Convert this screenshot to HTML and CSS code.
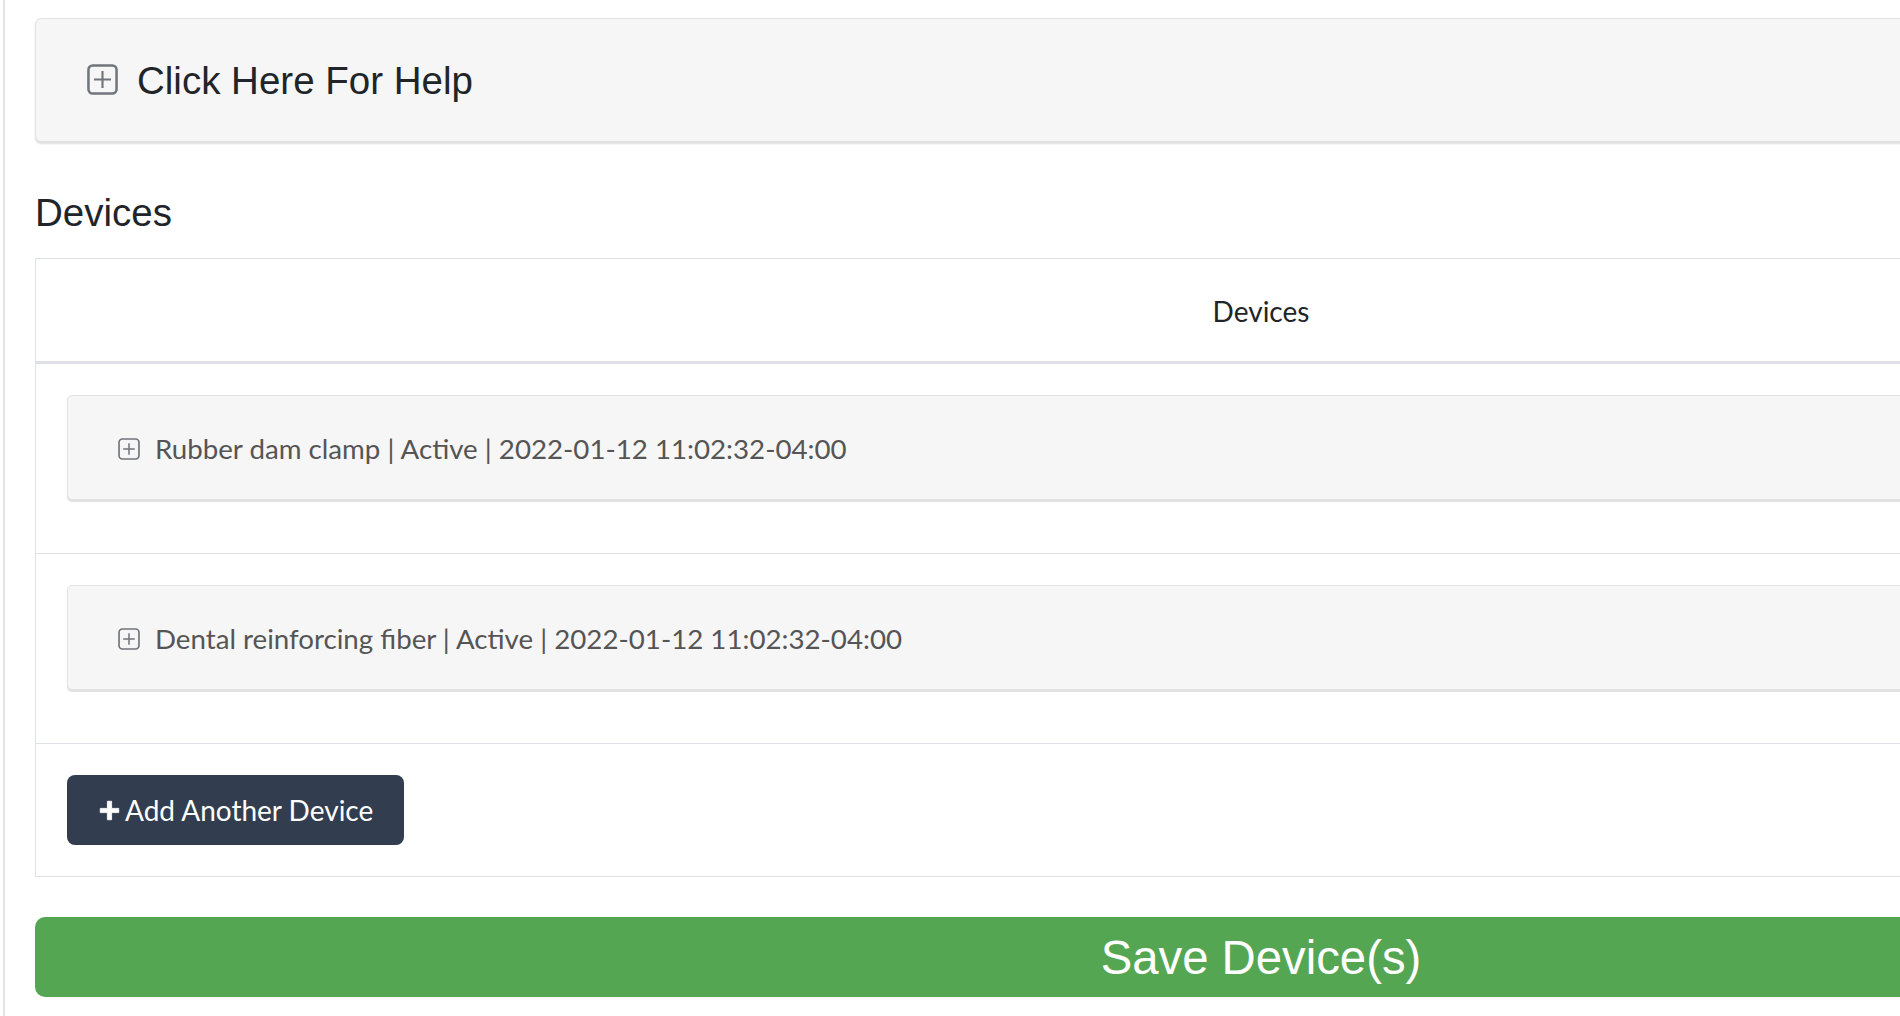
FILE: index.html
```html
<!DOCTYPE html>
<html lang="en">
<head>
<meta charset="utf-8">
<title>Devices</title>
<link rel="stylesheet" href="styles.css">
</head>
<body>
<div class="page">
  <div class="help-panel">
    <svg class="sq-icon sq-icon-lg" viewBox="0 0 16 16" aria-hidden="true">
      <rect x="0.75" y="0.75" width="14.5" height="14.5" rx="2.2" ry="2.2" fill="none" stroke="currentColor" stroke-width="1.3"/>
      <path d="M8 3.6v8.8M3.6 8h8.8" stroke="currentColor" stroke-width="1.1" fill="none"/>
    </svg>
    <span class="help-text">Click Here For Help</span>
  </div>

  <h2 class="section-title">Devices</h2>

  <table class="devices-table">
    <thead>
      <tr><th>Devices</th></tr>
    </thead>
    <tbody>
      <tr>
        <td>
          <div class="device-card">
            <svg class="sq-icon sq-icon-sm" viewBox="0 0 16 16" aria-hidden="true">
              <rect x="0.75" y="0.75" width="14.5" height="14.5" rx="2.4" ry="2.4" fill="none" stroke="currentColor" stroke-width="1.2"/>
              <path d="M8 3.8v8.4M3.8 8h8.4" stroke="currentColor" stroke-width="1.1" fill="none"/>
            </svg>
            <span>Rubber dam clamp | Active | 2022-01-12 11:02:32-04:00</span>
          </div>
        </td>
      </tr>
      <tr>
        <td>
          <div class="device-card">
            <svg class="sq-icon sq-icon-sm" viewBox="0 0 16 16" aria-hidden="true">
              <rect x="0.75" y="0.75" width="14.5" height="14.5" rx="2.4" ry="2.4" fill="none" stroke="currentColor" stroke-width="1.2"/>
              <path d="M8 3.8v8.4M3.8 8h8.4" stroke="currentColor" stroke-width="1.1" fill="none"/>
            </svg>
            <span>Dental reinforcing fiber | Active | 2022-01-12 11:02:32-04:00</span>
          </div>
        </td>
      </tr>
      <tr>
        <td>
          <button class="add-btn" type="button">
            <svg class="plus-icon" viewBox="0 0 20 20" aria-hidden="true">
              <path d="M8 1.2h4v6.8h6.8v4H12v6.8H8V12H1.2V8H8z" fill="currentColor" stroke="currentColor" stroke-width="0.8" stroke-linejoin="round"/>
            </svg>
            <span>Add Another Device</span>
          </button>
        </td>
      </tr>
    </tbody>
  </table>

  <button class="save-btn" type="button">Save Device(s)</button>
</div>
</body>
</html>
```

FILE: styles.css
```css
html, body {
  margin: 0;
  padding: 0;
  background: #ffffff;
  overflow: hidden;
}

.page {
  margin-left: 3px;
  border-left: 2px solid #e4e4e4;
  padding: 18px 0 40px 30px;
  width: 2452px;
  min-height: 1000px;
}

.help-panel {
  display: flex;
  align-items: center;
  height: 122px;
  padding-left: 51px;
  background: #f6f6f6;
  border: 1px solid #e2e2e2;
  border-radius: 6px;
  box-shadow: 0 2px 2px rgba(0, 0, 0, 0.13);
  color: #212529;
}

.sq-icon {
  flex: none;
  color: #70757b;
}

.sq-icon-lg {
  width: 31px;
  height: 31px;
  margin-right: 19px;
  margin-top: -2px;
}

.help-text {
  font-family: "Liberation Sans", Arial, Helvetica, sans-serif;
  font-size: 38.5px;
  line-height: 46px;
  color: #212529;
  margin-top: 2px;
}

.section-title {
  margin: 48px 0 22px 0;
  font-family: "Liberation Sans", Arial, Helvetica, sans-serif;
  font-weight: 400;
  font-size: 38.5px;
  line-height: 46px;
  color: #212529;
}

.devices-table {
  width: 100%;
  border-collapse: collapse;
  border: 1px solid #dee2e6;
  font-family: Lato, "Open Sans", sans-serif;
}

.devices-table th {
  padding: 32px 32px 30px;
  font-size: 28px;
  line-height: 40px;
  font-weight: 400;
  color: #212529;
  text-align: center;
  border-bottom: 3px solid #dee2e6;
}

.devices-table td {
  padding: 31px;
  border-top: 1px solid #dee2e6;
}

.devices-table tbody tr:first-child td {
  border-top: none;
}

.device-card {
  display: flex;
  align-items: center;
  padding: 33px 50px 30px;
  margin-bottom: 22px;
  background: #f6f6f6;
  border: 1px solid #e3e3e3;
  border-radius: 5px;
  box-shadow: 0 2px 1px rgba(0, 0, 0, 0.12);
  font-size: 27.7px;
  line-height: 40px;
  color: #555555;
}

.sq-icon-sm {
  width: 22px;
  height: 22px;
  margin-right: 15px;
}

.add-btn {
  display: inline-flex;
  align-items: center;
  height: 70px;
  padding: 0 31px 0 32px;
  border: none;
  border-radius: 8px;
  background: #323e50;
  color: #ffffff;
  font-family: Lato, "Open Sans", sans-serif;
  font-size: 28px;
  line-height: 40px;
  cursor: pointer;
}

.plus-icon {
  width: 21px;
  height: 21px;
  margin-right: 5px;
}

.save-btn {
  display: block;
  width: 100%;
  height: 80px;
  margin-top: 40px;
  border: none;
  border-radius: 10px;
  background: #54a653;
  color: #ffffff;
  font-family: "Liberation Sans", Arial, Helvetica, sans-serif;
  font-size: 47.3px;
  line-height: 80px;
  text-align: center;
  cursor: pointer;
}
```
